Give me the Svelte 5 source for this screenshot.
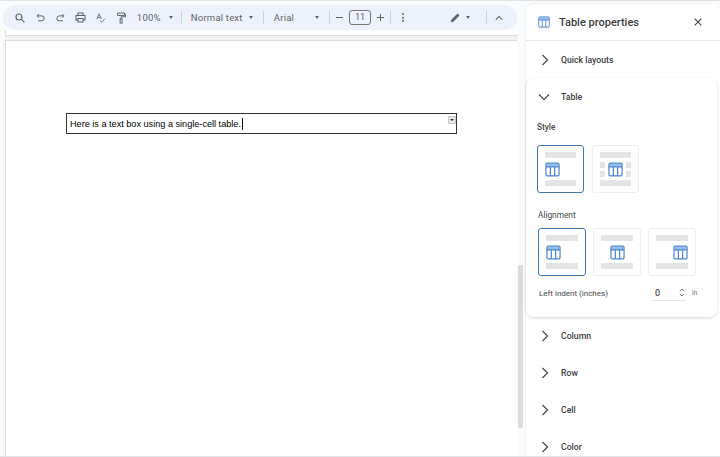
<script>
	const rows = ['Column', 'Row', 'Cell', 'Color'];
	const styleCards = [
		{ sel: true, side: false },
		{ sel: false, side: true }
	];
	const alignCards = [
		{ sel: true, pos: 'left' },
		{ sel: false, pos: 'center' },
		{ sel: false, pos: 'right' }
	];
</script>

{#snippet tableIcon(size)}
	<svg class="table-icon" width={size} height={size} viewBox="0 0 16 16" fill="none" stroke="#4a86d0" stroke-width="1.3">
		<rect x="1" y="1.2" width="14" height="13.6" rx="1.4" />
		<path d="M1 5.2h14M5.7 5.2v9.6M10.3 5.2v9.6" />
		<path d="M1.5 1.8h13v3.4h-13z" fill="#4a86d0" stroke="none" opacity="0.55" />
	</svg>
{/snippet}

{#snippet chevron()}
	<svg class="chev" width="10" height="12" viewBox="0 0 10 12" fill="none" stroke="#444746" stroke-width="1.2">
		<path d="M2.5 1l5 5-5 5" />
	</svg>
{/snippet}

{#snippet caret()}
	<span class="caret"></span>
{/snippet}

<div class="screen">
	<div class="main">
		<div class="toolbar">
			<button class="tool" aria-label="Search">
				<svg width="10" height="10" viewBox="0 0 12 12" fill="none" stroke="#5f6368" stroke-width="1.4"><circle cx="4.8" cy="4.8" r="3.6" /><path d="M7.4 7.4l3.9 3.9" /></svg>
			</button>
			<button class="tool" aria-label="Undo">
				<svg width="9" height="9" viewBox="0 0 11 11" fill="none" stroke="#5f6368" stroke-width="1.2"><path d="M1.5 3.5h5.5a2.8 2.8 0 0 1 0 6H2.5" /><path d="M3.6 1.2L1.3 3.5l2.3 2.3" /></svg>
			</button>
			<button class="tool" aria-label="Redo">
				<svg width="9" height="9" viewBox="0 0 11 11" fill="none" stroke="#5f6368" stroke-width="1.2"><path d="M9.5 3.5H4a2.8 2.8 0 0 0 0 6h4.5" /><path d="M7.4 1.2l2.3 2.3-2.3 2.3" /></svg>
			</button>
			<button class="tool" aria-label="Print">
				<svg width="11" height="11" viewBox="0 0 13 13" fill="none" stroke="#5f6368" stroke-width="1.3"><path d="M3.5 4V1.2h6V4M3.5 9.5H1.2V4.2h10.6v5.3H9.5" /><path d="M3.5 7.6h6v4.2h-6z" /></svg>
			</button>
			<button class="tool" aria-label="Spelling">
				<svg width="10" height="10" viewBox="0 0 13 13" fill="none" stroke="#5f6368" stroke-width="1.1"><path d="M1 8l3-7 3 7M2 5.8h4" /><path d="M5.5 10l2 2 4-4.5" /></svg>
			</button>
			<button class="tool" aria-label="Paint format">
				<svg width="9" height="12" viewBox="0 0 11 14" fill="none" stroke="#5f6368" stroke-width="1.2"><path d="M.8 1h8.4v3H.8zM9.2 2.5h1.2v3H5v2.6" /><rect x="3.8" y="8.2" width="2.4" height="5" /></svg>
			</button>
			<span class="label zoom">100%</span>
			{@render caret()}
			<span class="sep sep-zoom"></span>
			<span class="label style">Normal text</span>
			{@render caret()}
			<span class="sep sep-wide"></span>
			<span class="label font">Arial</span>
			{@render caret()}
			<span class="sep sep-wide"></span>
			<span class="pm minus"></span>
			<span class="size">11</span>
			<span class="pm plus"></span>
			<span class="sep sep-size"></span>
			<span class="dots"><i></i><i></i><i></i></span>
			<svg class="pencil" width="10" height="10" viewBox="0 0 12 12" fill="#5f6368"><path d="M1 11l.6-3L8.4 1.2a1 1 0 0 1 1.4 0l1 1a1 1 0 0 1 0 1.4L4 10.4z" /></svg>
			<span class="caret pencil-caret"></span>
			<span class="sep sep-end"></span>
			<svg class="up" width="8" height="6" viewBox="0 0 10 7" fill="none" stroke="#5f6368" stroke-width="1.3"><path d="M1 5.5l4-4 4 4" /></svg>
		</div>

		<div class="doc">
			<div class="page-end"></div>
			<div class="page-gap"></div>
			<div class="page">
				<div class="text-table">
					<span class="cell-text">Here is a text box using a single-cell table.</span><span class="cursor"></span>
					<span class="cell-menu"></span>
				</div>
			</div>
			<div class="scrollbar"></div>
		</div>
	</div>

	<aside class="panel">
		<header class="panel-head">
			{@render tableIcon(12)}
			<h2>Table properties</h2>
			<svg class="close" width="8" height="8" viewBox="0 0 8 8" stroke="#444746" stroke-width="1.1"><path d="M.7.7l6.6 6.6M7.3.7L.7 7.3" /></svg>
		</header>
		<div class="section closed">
			{@render chevron()}
			<span>Quick layouts</span>
		</div>
		<div class="card">
			<div class="section open">
				<svg class="chev" width="12" height="10" viewBox="0 0 12 10" fill="none" stroke="#444746" stroke-width="1.2"><path d="M1 2.5l5 5 5-5" /></svg>
				<span>Table</span>
			</div>
			<div class="sub first-sub">Style</div>
			<div class="cards two">
				{#each styleCards as c}
					<div class="opt" class:sel={c.sel}>
						<div class="bar"></div>
						<div class="mid">
							{#if c.side}<div class="side"><i></i><i></i></div>{/if}
							{@render tableIcon(15)}
							{#if c.side}<div class="side"><i></i><i></i></div>{/if}
						</div>
						<div class="bar"></div>
					</div>
				{/each}
			</div>
			<div class="sub align">Alignment</div>
			<div class="cards three">
				{#each alignCards as c}
					<div class="opt" class:sel={c.sel}>
						<div class="bar"></div>
						<div class="mid {c.pos}">{@render tableIcon(15)}</div>
						<div class="bar"></div>
					</div>
				{/each}
			</div>
			<div class="indent">
				<span>Left indent (inches)</span>
				<div class="num-field">
					<span class="num">0</span>
					<svg class="updown" width="6" height="9" viewBox="0 0 6 9" fill="none" stroke="#666" stroke-width="0.9"><path d="M.8 3L3 1l2.2 2M.8 6L3 8l2.2-2" /></svg>
				</div>
				<span class="unit">in</span>
			</div>
		</div>
		{#each rows as r}
			<div class="section closed">
				{@render chevron()}
				<span>{r}</span>
			</div>
		{/each}
	</aside>
</div>

<style>
	:global(body) {
		margin: 0;
		background: #f9fbfd;
	}

	.screen {
		width: 720px;
		height: 457px;
		box-sizing: border-box;
		display: flex;
		overflow: hidden;
		background: #f9fbfd;
		border-top: 1px solid #e1e3e6;
		border-bottom: 1px solid #e1e3e6;
		font-family: Roboto, "Liberation Sans", sans-serif;
		color: #3c4043;
	}

	.main {
		width: 526px;
		flex: none;
		padding-top: 4px;
		box-sizing: border-box;
		display: flex;
		flex-direction: column;
	}

	/* toolbar */
	.toolbar {
		width: 514px;
		height: 25px;
		margin-left: 3px;
		padding-left: 6.5px;
		box-sizing: border-box;
		flex: none;
		border-radius: 13px;
		background: #edf2fa;
		display: flex;
		align-items: center;
		font-size: 9.5px;
		color: #5f6368;
		white-space: nowrap;
	}

	.tool {
		width: 20.4px;
		flex: none;
		border: 0;
		padding: 0;
		background: none;
		display: flex;
		align-items: center;
		justify-content: center;
	}

	.label {
		flex: none;
		letter-spacing: 0.2px;
	}

	.zoom {
		margin-left: 5px;
		width: 32px;
	}

	.style {
		margin-left: 9px;
		width: 58.5px;
	}

	.font {
		margin-left: 10px;
		width: 41.5px;
	}

	.caret {
		flex: none;
		width: 0;
		height: 0;
		border-left: 2.5px solid transparent;
		border-right: 2.5px solid transparent;
		border-top: 3px solid #5f6368;
	}

	.sep {
		flex: none;
		width: 1px;
		height: 13px;
		background: #cfd3d8;
	}

	.sep-zoom {
		margin-left: 8px;
	}

	.sep-wide {
		margin-left: 9.5px;
	}

	.sep-size {
		margin-left: 6px;
	}

	.sep-end {
		margin-left: 16.5px;
	}

	.pm {
		flex: none;
		position: relative;
		width: 7px;
		height: 1px;
		background: #5f6368;
	}

	.minus {
		margin-left: 6.5px;
	}

	.plus {
		margin-left: 6px;
	}

	.plus::after {
		content: "";
		position: absolute;
		left: 3px;
		top: -3px;
		width: 1px;
		height: 7px;
		background: #5f6368;
	}

	.size {
		flex: none;
		width: 21.5px;
		height: 15px;
		margin-left: 6px;
		box-sizing: border-box;
		border: 1px solid #747775;
		border-radius: 3px;
		text-align: center;
		line-height: 13px;
		font-size: 9px;
	}

	.dots {
		display: flex;
		flex-direction: column;
		gap: 1.5px;
		margin-left: 11px;
	}

	.dots i {
		width: 2px;
		height: 2px;
		border-radius: 50%;
		background: #5f6368;
	}

	.pencil {
		flex: none;
		margin-left: 46px;
	}

	.pencil-caret {
		margin-left: 6px;
	}

	.up {
		flex: none;
		margin-left: 8px;
	}

	/* document */
	.doc {
		position: relative;
		flex: 1;
		padding-left: 5px;
		display: flex;
		flex-direction: column;
	}

	.page-end {
		height: 5px;
		width: 512px;
		background: #fff;
		border-left: 1px solid #dadce0;
		border-bottom: 1px solid #dadce0;
	}

	.page-gap {
		height: 4px;
		width: 513px;
		background: #f1f2f4;
	}

	.page {
		flex: 1;
		width: 512px;
		background: #fff;
		border-left: 1px solid #dadce0;
		border-top: 1px solid #dadce0;
		box-shadow: -2px 0 0 #f3f5f7;
		padding: 72px 0 0 60px;
		box-sizing: border-box;
	}

	.text-table {
		position: relative;
		width: 391px;
		height: 21px;
		box-sizing: border-box;
		border: 1px solid #333;
		padding-left: 3px;
		display: flex;
		align-items: center;
		font-family: "Liberation Sans", Arial, sans-serif;
		font-size: 9.15px;
		color: #000;
	}

	.cursor {
		width: 1.5px;
		height: 12px;
		background: #000;
		margin-left: 1px;
	}

	.cell-menu {
		position: absolute;
		top: 2px;
		right: 0;
		width: 8px;
		height: 8px;
		background: #e6e6e6;
		border: 1px solid #ccc;
		box-sizing: border-box;
	}

	.cell-menu::after {
		content: "";
		position: absolute;
		left: 1px;
		top: 2px;
		border-left: 2px solid transparent;
		border-right: 2px solid transparent;
		border-top: 2px solid #333;
	}

	.scrollbar {
		position: absolute;
		left: 518px;
		top: 235px;
		width: 5px;
		height: 163px;
		background: #dadce0;
		border-radius: 2px;
	}

	/* side panel */
	.panel {
		flex: 1;
		margin-top: 3px;
		background: #fff;
		border-radius: 8px 8px 0 0;
		box-shadow: 0 0 2px rgba(60, 64, 67, 0.12);
	}

	.panel-head {
		height: 36px;
		display: flex;
		align-items: center;
		padding-left: 12px;
		border-bottom: 1px solid #e6e8eb;
	}

	.panel-head h2 {
		margin: 0 0 0 9px;
		font-size: 11px;
		font-weight: 500;
		color: #3c4043;
	}

	.close {
		margin-left: auto;
		margin-right: 18px;
	}

	.section {
		height: 37px;
		display: flex;
		align-items: center;
		padding-left: 13.5px;
		font-size: 8.7px;
		font-weight: 500;
		color: #3c4043;
	}

	.section span {
		margin-left: 11.5px;
	}

	.section.open {
		padding-left: 12px;
	}

	.section.open span {
		margin-left: 11px;
	}

	.card {
		background: #fff;
		border-radius: 8px;
		box-shadow: 0 1px 3px rgba(60, 64, 67, 0.2);
		height: 239px;
		margin-right: 3px;
	}

	.sub {
		padding-left: 11px;
		font-size: 8.3px;
		font-weight: 500;
		color: #444746;
	}

	.first-sub {
		margin-top: 7px;
	}

	.align {
		margin-top: 17px;
		padding-left: 12px;
		font-weight: 400;
	}

	.cards {
		display: flex;
	}

	.two {
		gap: 8px;
		padding: 13px 0 0 11px;
	}

	.two .opt {
		width: 47px;
	}

	.three {
		gap: 7px;
		padding: 8px 0 0 12px;
	}

	.opt {
		width: 48px;
		height: 48px;
		box-sizing: border-box;
		border: 1px solid #eeeeee;
		border-radius: 3px;
		padding: 6px 7px;
		display: flex;
		flex-direction: column;
		justify-content: space-between;
	}

	.opt.sel {
		border: 1.5px solid #3f76b4;
	}

	.bar {
		height: 6px;
		background: #e4e4e4;
		flex: none;
	}

	.mid {
		display: flex;
		justify-content: space-between;
		align-items: center;
	}

	.mid.center {
		justify-content: center;
	}

	.mid.right {
		justify-content: flex-end;
	}

	.side {
		display: flex;
		flex-direction: column;
		gap: 3px;
	}

	.side i {
		display: block;
		width: 5px;
		height: 6px;
		background: #e4e4e4;
	}

	.table-icon {
		display: block;
		flex: none;
	}

	.indent {
		display: flex;
		align-items: center;
		padding: 9px 0 0 13px;
		font-size: 8px;
		color: #444746;
	}

	.num-field {
		flex: none;
		width: 34px;
		height: 16px;
		margin-left: 44px;
		box-sizing: border-box;
		border-bottom: 1px solid #e4e6e8;
		padding-left: 3px;
		display: flex;
		align-items: center;
		justify-content: space-between;
		padding-right: 1px;
	}

	.num {
		font-size: 9px;
		color: #222;
	}

	.unit {
		margin-left: 6px;
		font-size: 7px;
		color: #777;
	}
</style>
